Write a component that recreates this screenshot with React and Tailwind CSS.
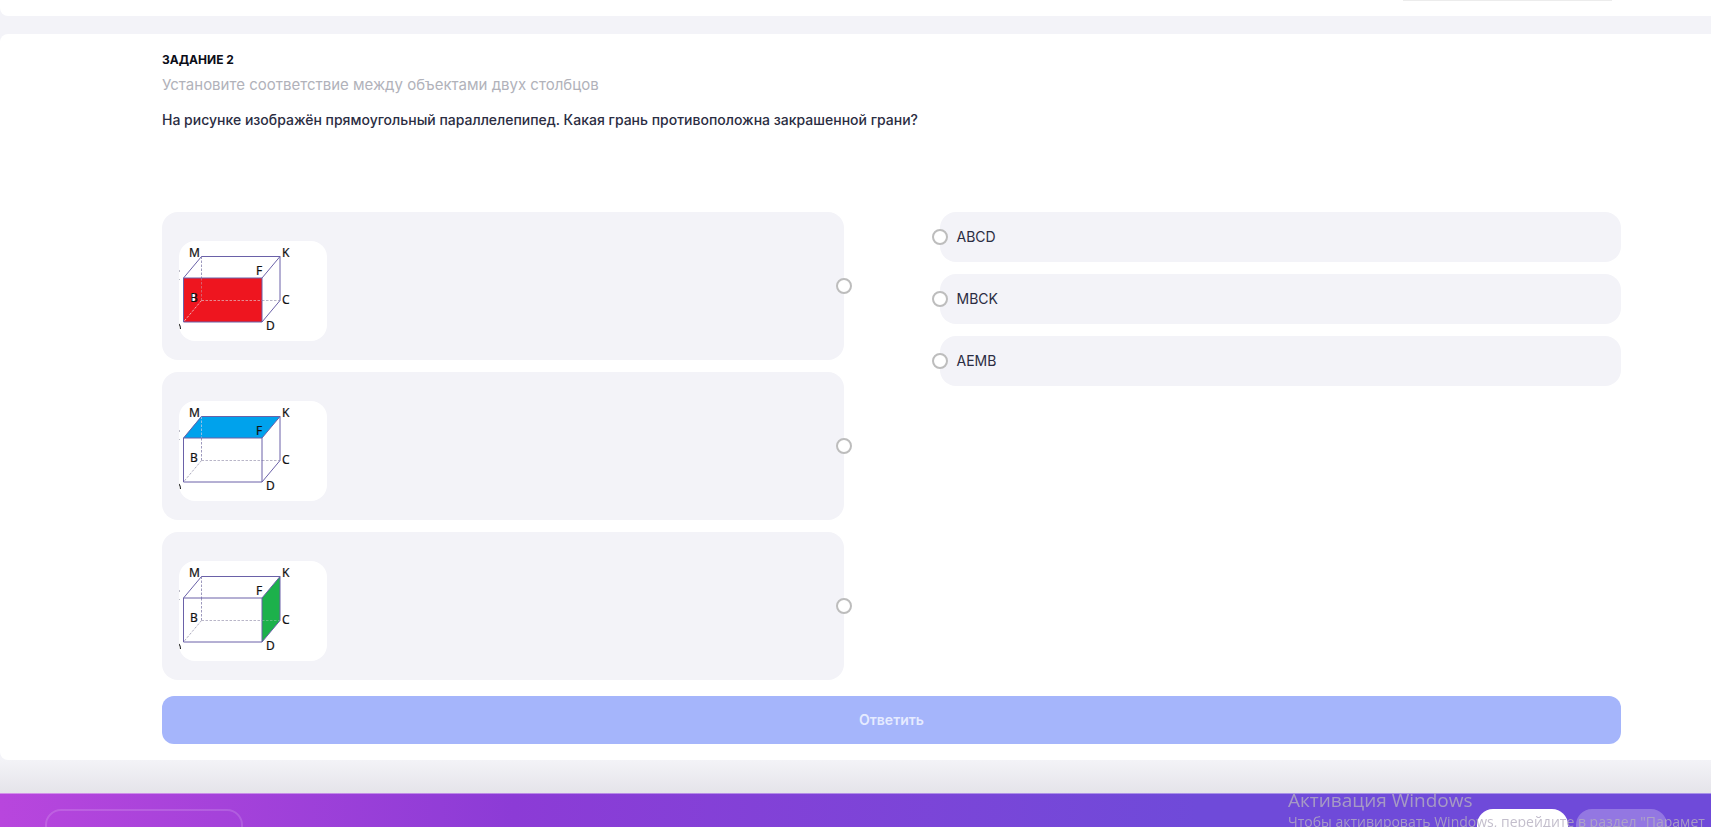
import { clsx } from 'clsx'

const faces = {
  front: { points: '4.5,37 83,37 83,81 4.5,81', fill: '#ee151f' },
  top: { points: '22,15.5 101,15.5 83,37 4.5,37', fill: '#00a2ec' },
  side: { points: '101,15.5 101,59.5 83,81 83,37', fill: '#1cb14b' }
}

const shapes = [
  { id: 'front', label: 'Закрашена передняя грань' },
  { id: 'top', label: 'Закрашена верхняя грань' },
  { id: 'side', label: 'Закрашена боковая грань' }
]

const answers = ['ABCD', 'MBCK', 'AEMB']

function Cuboid ({ face, label }) {
  const { points, fill } = faces[face]
  const isFront = face === 'front'
  return (
    <svg
      viewBox="0 0 148 100"
      role="img"
      aria-label={label}
      className="block h-[100px] w-[148px] rounded-2xl bg-white"
    >
      <polygon points={points} fill={fill} />
      <g fill="none" strokeWidth="1" strokeDasharray="2.5 1.5">
        <path d="M22.5 15.5V37" stroke={face === 'top' ? '#8fbfe6' : '#9d99bd'} />
        <path d="M22.5 37V59.5" stroke={isFront ? '#d8606c' : '#9d99bd'} />
        <path d="M22.5 59.5H83" stroke={isFront ? '#e58a90' : '#b9b6c8'} />
        <path d="M83 59.5H101" stroke={face === 'side' ? '#5fbf80' : '#b9b6c8'} />
        <path d="M22.5 59.5L4.5 81" stroke={isFront ? '#f0b0b4' : '#b0adc0'} />
      </g>
      <g fill="none" stroke="#6a61a8" strokeWidth="1">
        <path d="M4.5 37H83V81H4.5Z" />
        <path d="M4.5 37L22.5 15.5H101L83 37" />
        <path d="M101 15.5V59.5L83 81" />
      </g>
      <path d="M0.5 29V31M0.5 38V39" stroke="#b9b9c4" />
      <path d="M0 83Q1.5 85 1.5 88" stroke="#222" strokeWidth="1.2" fill="none" />
      {isFront && <rect x="12" y="52" width="4" height="8" fill="#fff" />}
      <g fontFamily="'Noto Sans', sans-serif" fontSize="12" fill="#111" stroke="#111" strokeWidth="0.2">
        <text x="10" y="16">M</text>
        <text x="103" y="16">K</text>
        <text x="77" y="34">F</text>
        <text x="11" y="61">B</text>
        <text x="103" y="63">C</text>
        <text x="87" y="89">D</text>
      </g>
    </svg>
  )
}

function Connector ({ side, label }) {
  return (
    <button
      type="button"
      aria-label={label}
      className={clsx(
        'absolute top-1/2 size-4 -translate-y-1/2 rounded-full border-2 border-[#bdbdbd] bg-white',
        side === 'right' ? '-right-2' : '-left-2'
      )}
    />
  )
}

export default function App () {
  return (
    <div className="flex h-screen flex-col overflow-hidden bg-[#f3f3f8] font-['Inter',sans-serif] text-[#2b2d42]">
      <section className="flex h-4 shrink-0 items-start justify-end rounded-bl-lg bg-white pr-[99px]">
        <div className="h-px w-[209px] bg-[#ececec]" />
      </section>

      <main className="mt-[18px] shrink-0 rounded-l-lg bg-white pt-[17px] pr-[90px] pb-4 pl-[162px]">
        <h2 className="text-xs leading-[18px] font-bold text-[#0b0d17]">ЗАДАНИЕ 2</h2>
        <p className="mt-1 text-[15px] leading-6 text-[#b1b2ba]">
          Установите соответствие между объектами двух столбцов
        </p>
        <p className="mt-3 text-sm leading-[22px] font-medium">
          На рисунке изображён прямоугольный параллелепипед. Какая грань противоположна закрашенной грани?
        </p>

        <div className="mt-[81px] grid grid-cols-2 items-start gap-24">
          <ul className="flex flex-col gap-3">
            {shapes.map(shape => (
              <li key={shape.id} className="relative rounded-2xl bg-[#f3f3f8] px-[17px] pt-[29px] pb-[19px]">
                <Cuboid face={shape.id} label={shape.label} />
                <Connector side="right" label={shape.label} />
              </li>
            ))}
          </ul>
          <ul className="flex flex-col gap-3">
            {answers.map(answer => (
              <li key={answer} className="relative rounded-2xl bg-[#f3f3f8] px-[17px] py-[13px] text-sm leading-6">
                <Connector side="left" label={answer} />
                {answer}
              </li>
            ))}
          </ul>
        </div>

        <button
          type="button"
          className="mt-4 h-12 w-full rounded-xl bg-[#a5b5fb] text-sm font-semibold text-[#e6ebff]"
        >
          Ответить
        </button>
      </main>

      <div className="h-[33px] shrink-0 bg-linear-to-b from-[#f3f3f7] to-[#e5e4ea]" />

      <footer className="flex grow items-start justify-between border-t border-white/40 bg-linear-to-r from-[#b846dd] via-[#8c3bd6] via-30% to-[#6f4ad9] to-70% pt-[15px] pr-11 pl-[45px]">
        <div className="h-12 w-[198px] rounded-2xl border-2 border-white/15" />
        <div className="flex gap-2">
          <div className="h-12 w-[91px] rounded-2xl bg-white" />
          <div className="h-12 w-[91px] rounded-2xl bg-white/25" />
        </div>
      </footer>

      <div className="pointer-events-none fixed top-[788px] left-[1288px] font-['Open_Sans',sans-serif] whitespace-nowrap text-[#b4aebf]/80">
        <p className="text-[19px] leading-6">Активация Windows</p>
        <p className="text-sm leading-5">Чтобы активировать Windows, перейдите в раздел "Парамет</p>
      </div>
    </div>
  )
}
